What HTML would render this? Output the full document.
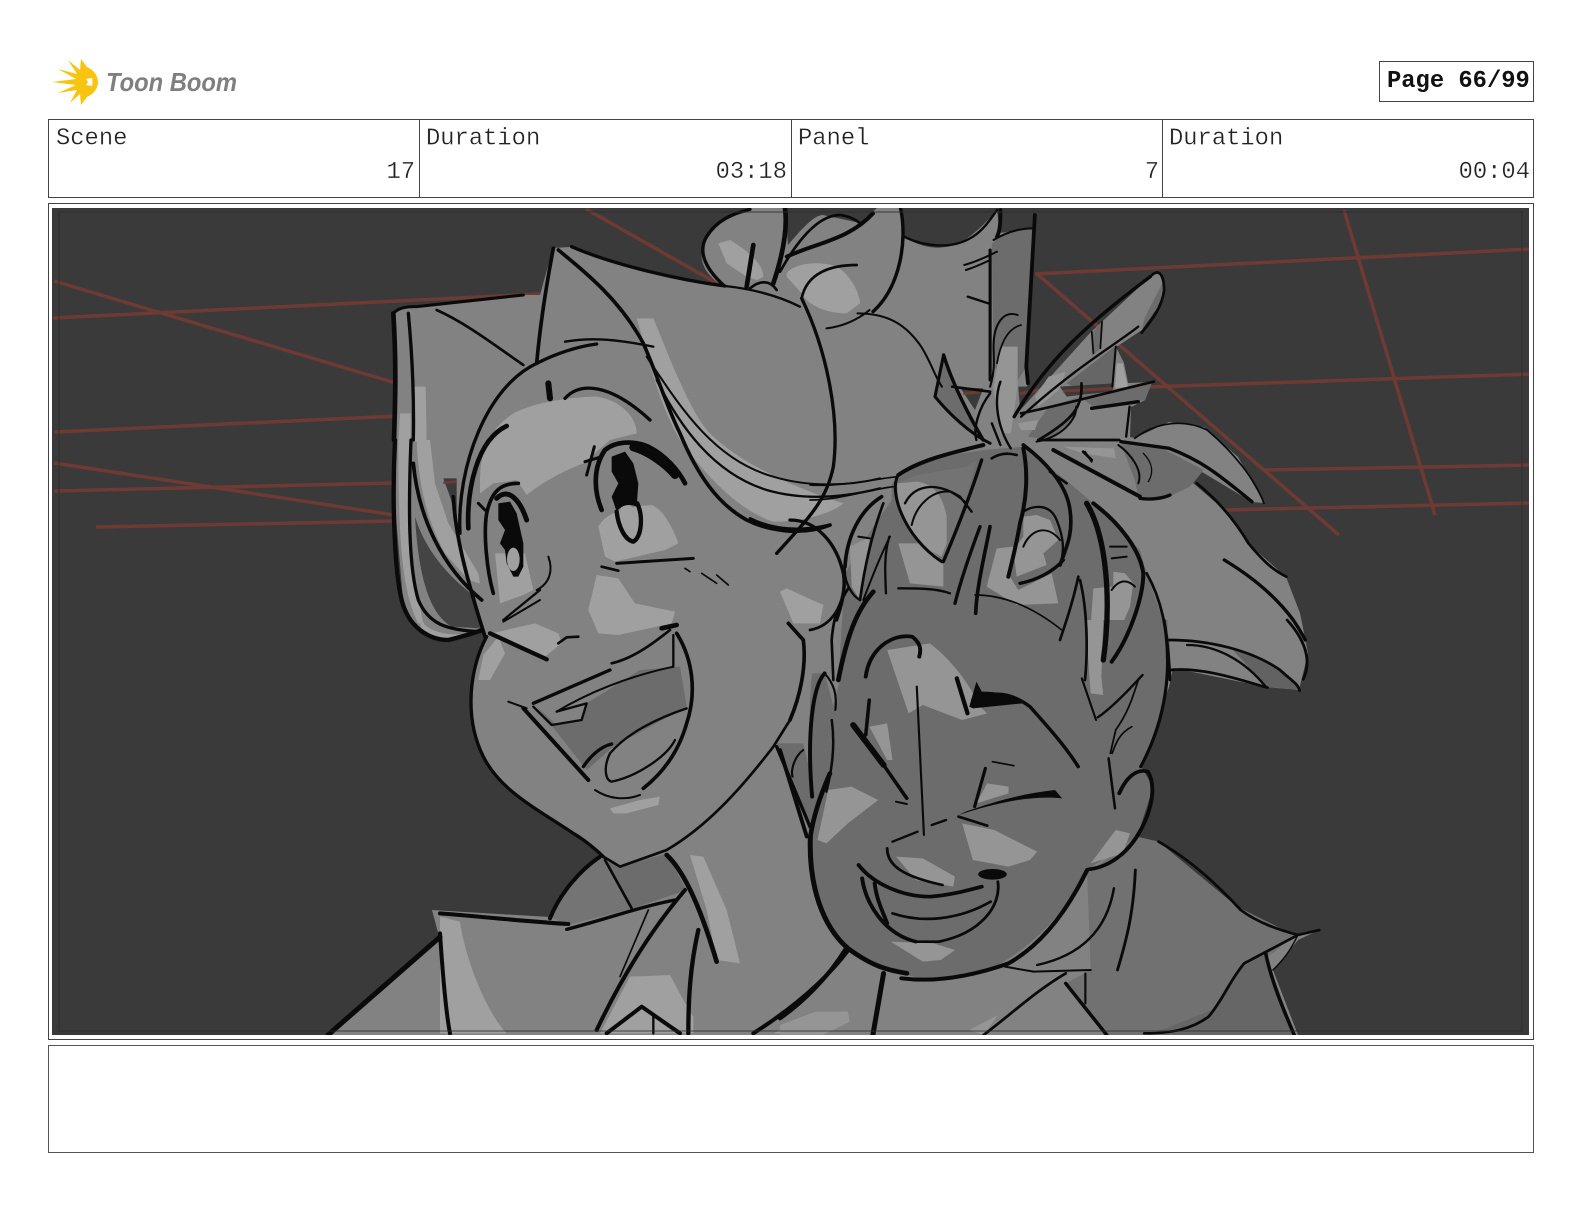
<!DOCTYPE html>
<html lang="en">
<head>
<meta charset="utf-8">
<title>Storyboard page 66</title>
<style>
html,body{margin:0;padding:0;background:#fff}
svg{display:block}
.t{font-family:"Liberation Mono",monospace;font-size:23.8px;fill:#222;stroke:#fff;stroke-width:.3px;paint-order:normal}
.p{font-family:"Liberation Mono",monospace;font-size:23.8px;font-weight:700;fill:#111}
.m{fill:#828282}.d{fill:#6c6c6c}.l{fill:#a0a0a0}.h{fill:#959595}.b{fill:#3a3a3a}
.s{fill:none;stroke:#0a0a0a;stroke-linecap:round;stroke-linejoin:round}
.f{fill:#0a0a0a}
</style>
</head>
<body>
<svg xmlns="http://www.w3.org/2000/svg" width="1584" height="1224" viewBox="0 0 1584 1224">
<defs><clipPath id="c"><rect x="52" y="208" width="1477" height="827"/></clipPath></defs>
<rect width="1584" height="1224" fill="#fff"/>

<!-- logo -->
<path fill="#f7c50f" d="M52,82L76,79L58,69L77,74L68,60L80,70L81,59L87,67C94,70 98,76 98,82C98,88 94,94 87,97L81,105L80,94L70,103L77,90L58,93L76,85Z"/>
<path fill="#fff" d="M86,79L92,78Q93,82 92,86L86,85L88,82Z"/>
<text x="106" y="91" font-family="Liberation Sans,sans-serif" font-weight="700" font-style="italic" font-size="26" fill="#7f7f7f" textLength="131" lengthAdjust="spacingAndGlyphs">Toon Boom</text>

<!-- page box -->
<rect x="1379.5" y="61.5" width="154" height="40" fill="#fff" stroke="#444"/>
<text x="1387" y="87" class="p">Page 66/99</text>

<!-- header table -->
<rect x="48.5" y="119.5" width="1485" height="78" fill="#fff" stroke="#444"/>
<path d="M419.5,119V197M791.5,119V197M1162.5,119V197" stroke="#444" fill="none"/>
<text x="56" y="144.5" class="t">Scene</text>
<text x="426" y="144.5" class="t">Duration</text>
<text x="798" y="144.5" class="t">Panel</text>
<text x="1169" y="144.5" class="t">Duration</text>
<text x="415" y="178" class="t" text-anchor="end">17</text>
<text x="787" y="178" class="t" text-anchor="end">03:18</text>
<text x="1159" y="178" class="t" text-anchor="end">7</text>
<text x="1530" y="178" class="t" text-anchor="end">00:04</text>

<!-- panel frame & notes -->
<rect x="48.5" y="203.5" width="1485" height="836" fill="#fff" stroke="#444"/>
<rect x="48.5" y="1045.5" width="1485" height="107" fill="#fff" stroke="#555"/>

<g clip-path="url(#c)">
<rect x="52" y="208" width="1477" height="827" fill="#3a3a3a"/>

<!-- red perspective lines -->
<g fill="none" stroke="#6e3a33" stroke-width="3.5">
<path d="M53,318L540,294M54,281L399,384M54,432L399,416M54,463L394,515M54,491L394,483M96,527L394,521M586,209L720,285"/>
<path d="M1035,274L1531,249M1036,273L1339,535M1344,210L1435,515M1000,392L1531,374M1263,470L1531,465M1223,510L1531,503"/>
</g>

<!-- silhouettes -->
<path class="m" d="M393,313Q398,306 417,306L523,295L540,295L553,248L570,247C630,270 680,280 723,286C705,275 700,262 702,250C708,228 730,212 750,208L785,208L788,245C805,225 815,215 823,215L860,223L877,208L900,208L904,237C920,247 935,249 945,247C960,246 975,235 997,210L1000,233L1033,228L1026,367L1028,383L1014,420L1000,440L900,600L860,1035L328,1035L440,940L432,910L550,917L603,857L573,833C533,807 500,790 483,757C463,717 470,667 487,637L482,632L448,640C430,640 410,625 403,600L395,505Z"/>
<path class="m" d="M1014,417L1090,333L1152,275L1162,273L1164,293L1142,330L1116,347L1124,363L1128,383L1152,382L1145,400L1131,407L1130,437L1135,438L1169,422L1204,427L1238,457L1264,503L1252,502L1202,472L1193,483L1221,507L1252,547L1286,577L1300,613L1308,653L1299,690L1266,687L1173,668L1169,687L1141,767L1153,787L1137,837L1158,842L1237,907L1294,935L1319,930L1298,940L1273,970L1298,1035L800,1035L800,700L1000,440Z"/>

<!-- girl fills upper -->
<g transform="translate(380,200) scale(.33333)">
<path class="l" d="M95,560L137,560L140,725L97,725Z"/>
<path class="l" d="M60,640L92,640L92,725L55,725Z"/>
<path class="l" d="M300,850C300,780 310,700 400,640C480,600 600,590 650,590C720,600 770,650 770,700L690,720L610,790C530,820 470,860 440,885L410,840L340,850L300,880Z"/>
<path class="l" d="M770,355L820,355C860,450 930,640 990,700C1060,770 1200,850 1390,910C1340,950 1250,965 1180,965C1100,940 1000,860 900,720C830,600 800,450 770,355Z"/>
<path class="l" d="M1220,220C1240,190 1320,180 1370,200C1420,230 1440,290 1440,310L1400,340C1330,340 1280,310 1265,280L1220,230Z"/>
<path class="l" d="M1015,130L1050,120C1100,150 1150,190 1150,230L1130,240L1100,230L1040,190Z"/>
<path class="l" d="M1200,1175L1220,1165L1330,1215L1320,1270L1240,1270Z"/>
</g>

<!-- eyes/tail fills -->
<g transform="translate(385,440) scale(.33333)">
<path class="b" d="M175,115L215,115L215,235L195,170Z"/>
<path d="M175,128L215,125" stroke="#6e3a33" stroke-width="8"/>
<path fill="#444" d="M90,230C100,400 130,520 200,560L285,565L270,470C190,410 120,330 90,230Z"/>
<path class="l" d="M40,0L75,0L75,350L115,550L100,550C50,450 40,300 40,0Z"/>
<path class="l" d="M95,0L135,0L150,130L190,250L280,400L285,430L250,420L180,340C130,250 100,140 95,0Z"/>
<path class="l" d="M100,520L120,555C150,580 200,590 270,578C220,598 150,600 110,575Z"/>
<path class="l" d="M640,260C660,220 720,200 800,195C840,210 870,280 880,310L840,330L690,365L660,350Z"/>
<path class="l" d="M330,340L420,340L445,450L415,465L345,490Z"/>
<path class="l" d="M635,405L700,415L750,490L870,515L860,550L700,585L640,580L610,510Z"/>
<path class="l" d="M320,580L450,550L520,580L530,610L480,650L340,590Z"/>
</g>

<g transform="translate(440,600) scale(.33333)">
<path class="l" d="M115,240L130,165L175,110L195,160L150,240Z"/>
<path class="l" d="M510,625L600,600L660,590L655,615L560,640L520,640Z"/>
<path class="d" d="M290,320L600,210L720,200L740,320L520,440L440,510Z"/>
<path class="m" d="M280,310L510,210L600,170L700,110L700,200L600,210L440,310L430,360L350,375Z"/>
<path class="m" d="M500,470L740,325L705,420C680,470 590,530 515,545Z"/>
<path class="d" d="M490,780L545,800L680,760L740,870L580,925Z"/>
<path fill="#747474" d="M330,950C370,870 430,810 490,770L580,925L380,975Z"/>
<path class="l" d="M750,765L790,770L860,930L900,1090L830,1080L800,930Z"/>
<path class="l" d="M480,1300L570,1130L690,1125L730,1200L760,1250L760,1300Z"/>
<path class="l" d="M0,950L60,965C80,1100 150,1250 200,1300L0,1300Z"/>
<path class="l" d="M1000,1300L1130,1240L1220,1235L1225,1265L1150,1300Z"/>
<path class="d" d="M1010,430L1090,430L1130,600L1110,700Z"/>
</g>

<!-- ponytail fills -->
<g transform="translate(780,200) scale(.34444,.33333)">
<path class="d" d="M615,130L660,95L735,85L715,500L680,560L620,500Z"/>
<path class="h" d="M640,440L690,440L690,560L670,700L640,700L620,560Z"/>
<path class="d" d="M450,590L475,470L510,560L590,710L540,680Z"/>
<path class="d" d="M905,400L935,365L930,445L905,470Z"/>
<path class="d" d="M1090,290L1110,250L1105,310L1050,390L1060,350Z"/>
<path class="h" d="M780,530L830,515L810,570L750,620L740,590Z"/>
<path class="d" d="M870,590L1080,548L1060,600L910,620Z"/>
<path class="d" d="M780,620L870,590L860,650L780,720L720,710Z"/>
<path class="h" d="M690,670L750,660L740,690L700,690Z"/>
<path class="h" d="M820,740L970,745L975,775L880,760Z"/>
<path class="d" d="M990,730L1100,740L1230,810L1190,860L1120,895L1040,890L1030,840Z"/>
</g>
<g transform="translate(900,330) scale(.33333)">
<path class="b" d="M180,172L250,175L225,240Z"/>
<path class="b" d="M355,170L400,170L360,235Z"/>
<path fill="#666" d="M500,160L650,45L640,170L540,180Z"/>
<path class="b" d="M480,170L640,160L635,185L540,195L500,200Z"/>
<path d="M190,190L240,186M360,190L400,186M490,183L640,175" stroke="#6e3a33" stroke-width="9" fill="none"/>
<path class="l" d="M650,100L668,100L684,170L645,175Z"/>
</g>

<!-- boy hair fills -->
<g transform="translate(810,440) scale(.33333)">
<path class="d" d="M245,130C330,60 420,45 520,30L640,20L780,130L850,190L990,330L1010,400L1080,600L1080,720L85,720L105,400L190,260L245,180Z"/>
<path class="m" d="M262,130L320,105L470,80L500,60L470,170L400,365C330,320 260,230 262,130Z" opacity=".35"/>
<path class="h" d="M262,130L320,125C370,130 400,170 410,230L410,310L395,350L340,320C290,270 260,200 262,130Z"/>
<path class="h" d="M265,310L340,310L400,365L400,440L300,430Z"/>
<path class="h" d="M120,320L180,290L150,480L125,440Z"/>
<path class="h" d="M640,230L680,225L720,240L745,300L700,340L710,375L620,410L610,330L640,290Z"/>
<path class="h" d="M560,325L610,320L600,410L625,450L725,400L745,490L620,495L530,440Z"/>
<path class="h" d="M850,445L910,440L910,395L945,400L970,430L960,500L900,640L860,660L865,720L830,720Z"/>
</g>

<!-- boy face fills -->
<g transform="translate(780,620) scale(.35714,.33333)">
<path class="d" d="M85,650C80,800 120,920 190,985C260,1050 400,1090 500,1075C650,1050 790,900 860,750L1000,650L1045,500L1010,440C1060,350 1090,200 1085,0L220,0C150,200 100,500 85,650Z"/>
<path fill="#717171" d="M860,760L1000,650L1060,665L1280,860L1440,945L1380,1000L1280,1050L1210,1170L1030,1245L920,1245L800,1090L870,1050Z"/>
<path fill="#666" d="M1280,1050L1360,1000L1440,1245L1030,1245L1210,1170Z"/>
<path fill="#626262" d="M1260,80L1330,105L1420,170L1455,210L1360,200Z"/>
<path class="d" d="M90,160L125,160L155,280L130,515L95,530C75,350 85,200 90,160Z"/>
<path class="h" d="M300,90L420,70C480,120 530,190 560,260L580,280L510,300L400,255L360,280Z"/>
<path class="h" d="M250,320L300,310L315,420L300,420Z"/>
<path class="h" d="M105,660L135,510L200,500L275,540L190,610L130,670Z"/>
<path class="h" d="M580,490L640,500L640,520L550,550Z"/>
<path class="h" d="M510,610L600,630L720,695L700,720L640,740L540,720Z"/>
<path class="h" d="M325,710L400,715L490,770L485,800L380,780Z"/>
<path class="h" d="M310,965L430,970L490,990L450,1020L400,1025Z"/>
<path class="h" d="M870,730L940,630L980,640L960,700Z"/>
<path class="h" d="M855,0L905,0L900,170L905,225L870,220Z"/>
<path class="h" d="M0,1215L100,1175L190,1175L195,1205L120,1245L0,1245Z"/>
<path class="h" d="M530,1230L610,1185L570,1245Z"/>
<path class="f" d="M530,260L550,185L565,215C620,215 660,230 680,250L540,265Z"/>
<path class="f" d="M500,585C600,550 700,525 790,535L770,510C680,520 600,545 520,575Z"/>
<ellipse cx="595" cy="763" rx="40" ry="16" class="f"/>
</g>

<!-- black lines: girl top -->
<g transform="translate(380,200) scale(.33333)" class="s">
<path stroke-width="9" d="M40,340Q60,318 110,320L430,285"/>
<path stroke-width="8" d="M170,330C260,370 350,440 430,495"/>
<path stroke-width="11" d="M520,145C500,250 480,380 470,490"/>
<path stroke-width="10" d="M575,140C700,195 900,240 1035,258"/>
<path stroke-width="7" d="M1035,258C1100,265 1180,280 1260,320"/>
<path stroke-width="11" d="M535,150C620,220 720,300 790,430C830,520 860,620 900,700C950,820 1010,910 1100,960C1160,990 1260,1010 1350,975"/>
<path stroke-width="14" d="M40,340C50,500 45,620 42,720"/>
<path stroke-width="10" d="M85,340C100,500 102,620 100,720"/>
<path stroke-width="10" d="M240,1000C230,800 320,560 470,490C530,460 590,440 650,432"/>
<path stroke-width="7" d="M555,425C640,410 720,420 820,440"/>
<path stroke-width="14" d="M265,985C260,870 290,720 380,678"/>
<path stroke-width="18" d="M505,550L510,595"/>
<path stroke-width="10" d="M555,595C600,545 690,550 810,660"/>
<path stroke-width="9" d="M710,1090L940,1075"/>
<path stroke-width="8" d="M665,1100L715,1112"/>
<path stroke-width="5" d="M915,1105L930,1115M965,1120L1010,1150M1010,1125L1045,1155"/>
<path stroke-width="6" d="M505,1070C520,1110 510,1150 470,1170"/>
<path stroke-width="7" d="M480,1170L370,1260"/>
<path stroke-width="10" d="M1030,255C970,200 955,150 980,110C1010,60 1060,40 1110,28"/>
<path stroke-width="14" d="M1215,25C1225,100 1200,190 1180,250M1120,135L1100,260"/>
<path stroke-width="8" d="M1110,265C1140,240 1170,240 1190,270"/>
<path stroke-width="8" d="M1200,215C1270,90 1330,45 1380,45C1420,50 1440,70 1440,70M1430,195C1350,195 1280,220 1265,295"/>
<path stroke-width="10" d="M1265,295C1340,450 1380,650 1360,800C1340,900 1290,950 1190,1060M1230,960C1310,960 1370,1030 1390,1120C1400,1170 1380,1230 1370,1260"/>
<path stroke-width="6" d="M800,470C900,620 1000,780 1180,830C1280,860 1400,860 1500,835"/>
<path stroke-width="7" d="M830,540C900,680 1000,820 1160,870C1280,905 1400,890 1500,865"/>
<path stroke-width="8" d="M1110,955C1160,980 1240,1000 1345,975"/>
</g>

<!-- eyes + tail lines -->
<g transform="translate(385,440) scale(.33333)" class="s">
<ellipse cx="730" cy="245" rx="26" ry="56" class="l" stroke="none" transform="rotate(-8 730 245)"/>
<path class="f" stroke="none" d="M680,50L720,35L745,70L760,130L755,200C730,190 710,195 695,215L680,170L700,130L680,95Z"/>
<path stroke-width="13" d="M695,215C700,260 720,300 745,305C770,290 775,230 757,190"/>
<path stroke-width="14" d="M650,210C625,150 625,80 660,30C690,5 740,0 790,20C840,45 880,90 900,130"/>
<path stroke-width="24" d="M745,22C790,35 840,70 870,105"/>
<path stroke-width="9" d="M628,20L605,105M600,65L650,50"/>
<path class="f" stroke="none" d="M340,190L375,185L395,220L415,310L415,380L400,410L385,410L365,370L360,330L345,310L360,270L340,240Z"/>
<ellipse cx="385" cy="358" rx="19" ry="35" class="l" stroke="none"/>
<path stroke-width="11" d="M325,460C305,390 295,280 305,220C320,150 350,130 400,130"/>
<path stroke-width="15" d="M335,175C370,140 405,180 425,240"/>
<path stroke-width="9" d="M280,190L300,210"/>
<path stroke-width="13" d="M30,0C20,200 30,400 50,480C70,560 130,600 190,600C230,590 270,580 290,570"/>
<path stroke-width="10" d="M78,0C70,200 70,380 100,480C130,550 180,570 285,575"/>
<path stroke-width="11" d="M85,70C100,230 170,380 290,480"/>
<path stroke-width="11" d="M205,170C210,280 240,400 300,590"/>
<path stroke-width="8" d="M520,610L545,592L580,590"/>
</g>

<!-- black lines: ponytail -->
<g transform="translate(780,200) scale(.34444,.33333)" class="s">
<path stroke-width="12" d="M20,170C100,130 200,120 270,40"/>
<path stroke-width="10" d="M350,25C370,120 350,260 270,335"/>
<path stroke-width="6" d="M225,340C320,340 370,380 410,440C440,490 450,530 470,560M135,385C180,380 225,360 260,330"/>
<path stroke-width="7" d="M360,110C420,140 500,150 560,110C590,90 610,60 630,30"/>
<path stroke-width="11" d="M640,30C640,60 640,90 630,110"/>
<path stroke-width="9" d="M610,150L610,540"/>
<path stroke-width="11" d="M740,45L715,500L720,550"/>
<path stroke-width="6" d="M620,120C660,95 700,85 735,85M535,195C570,185 600,170 630,155M540,210C570,200 590,190 610,180M690,345C650,330 620,370 620,440C620,480 625,510 610,560"/>
<path stroke-width="7" d="M545,290L605,310"/>
<path stroke-width="5" d="M700,375C660,385 640,430 630,490"/>
<path stroke-width="9" d="M475,465L450,590C490,640 550,700 610,730"/>
<path stroke-width="10" d="M475,465C500,550 550,650 590,720"/>
<path stroke-width="8" d="M500,560L610,575"/>
<path stroke-width="7" d="M640,545C620,600 630,680 670,745M610,580C580,620 560,680 570,720M615,670L640,735"/>
<path stroke-width="10" d="M680,650C770,490 880,380 1075,230"/>
<path stroke-width="8" d="M1080,225C1100,205 1115,225 1115,270C1110,320 1080,360 1050,398"/>
<path stroke-width="7" d="M1040,380C980,430 860,500 700,650"/>
<path stroke-width="5" d="M905,395L910,460M935,365L930,445"/>
<path stroke-width="8" d="M700,640C800,620 980,570 1085,545M875,550C880,620 850,660 750,720"/>
<path stroke-width="10" d="M905,625L1040,605"/>
<path stroke-width="6" d="M860,620C860,660 820,710 745,725M975,440L965,560"/>
<path stroke-width="7" d="M1015,620L1005,710"/>
<path stroke-width="8" d="M880,755L905,780"/>
<path stroke-width="10" d="M990,725L1130,745C1220,780 1270,820 1370,905"/>
<path stroke-width="5" d="M1030,715C1100,660 1180,660 1240,690C1320,760 1380,840 1405,910"/>
<path stroke-width="8" d="M750,720L985,720"/>
<path stroke-width="8" d="M1210,850C1270,900 1320,960 1360,1030C1400,1080 1430,1110 1470,1130"/>
<path stroke-width="10" d="M1290,1080C1370,1130 1440,1190 1490,1260C1510,1290 1520,1310 1525,1320"/>
</g>

<!-- black lines: boy hair -->
<g transform="translate(810,440) scale(.33333)" class="s">
<path stroke-width="12" d="M265,105C330,60 420,40 520,15"/>
<path stroke-width="9" d="M265,105C235,150 280,290 395,365"/>
<path stroke-width="7" d="M285,190C310,140 370,120 450,170L485,215"/>
<path stroke-width="6" d="M305,255C320,190 370,150 420,155C440,165 465,185 470,190"/>
<path stroke-width="10" d="M515,60C480,170 440,270 400,365"/>
<path stroke-width="8" d="M545,55C570,40 590,38 620,45"/>
<path stroke-width="12" d="M640,25C655,100 650,180 630,250C620,310 605,370 595,410"/>
<path stroke-width="7" d="M640,215C670,195 720,190 740,240C760,290 765,330 750,375"/>
<path stroke-width="6" d="M640,320C660,270 710,250 750,300"/>
<path stroke-width="10" d="M630,430C680,420 730,395 760,360"/>
<path stroke-width="11" d="M640,15C700,60 770,130 780,210C790,280 770,320 750,375"/>
<path stroke-width="8" d="M720,95L770,130"/>
<path stroke-width="12" d="M730,30L990,170"/>
<path stroke-width="10" d="M990,175C1020,180 1060,175 1080,165"/>
<path stroke-width="16" d="M830,190C890,290 905,480 880,660"/>
<path stroke-width="12" d="M850,190C930,250 990,330 1000,400C1000,470 960,590 905,665"/>
<path stroke-width="6" d="M900,320L950,320M905,355L950,350M905,450C925,420 950,415 975,440"/>
<path stroke-width="8" d="M1010,400C1050,470 1075,560 1080,720M805,410C790,480 770,540 750,600M810,420C830,500 835,620 825,720"/>
<path stroke-width="10" d="M510,260C480,340 450,430 435,490"/>
<path stroke-width="11" d="M540,260C525,340 500,440 497,520"/>
<path stroke-width="7" d="M265,445C320,445 380,445 420,460"/>
<path stroke-width="5" d="M495,465C590,465 680,510 755,570M0,265L55,258"/>
<path stroke-width="11" d="M215,170C150,210 110,290 105,380"/>
<path stroke-width="8" d="M220,190C190,270 165,370 150,480"/>
<path stroke-width="6" d="M240,290C215,340 190,400 160,480M145,290L180,295"/>
<path stroke-width="7" d="M238,290C222,340 225,400 228,460M105,380C100,430 130,470 150,480"/>
<path stroke-width="14" d="M190,455C140,510 110,590 85,720"/>
<path stroke-width="8" d="M70,720L65,600C70,540 80,500 115,445"/>
<path stroke-width="8" d="M100,400C110,500 60,560 0,570"/>
<path stroke-width="5" d="M0,135C90,140 180,120 260,110M0,180C90,180 170,150 250,140"/>
<path stroke-width="6" d="M925,15C960,40 1000,90 985,130M825,35L845,65"/>
<path stroke-width="4" d="M1000,40C1030,70 1030,100 1015,125"/>
</g>

<!-- black lines: girl lower -->
<g transform="translate(440,600) scale(.33333)" class="s">
<path stroke-width="13" d="M150,100L320,178"/>
<path stroke-width="6" d="M190,65L300,0"/>
<path stroke-width="10" d="M140,110C90,200 70,350 130,470C180,570 280,620 400,700C450,730 490,770 490,770"/>
<path stroke-width="8" d="M490,770L540,800L680,750C800,680 900,570 1000,440L1050,360"/>
<path stroke-width="10" d="M280,310L510,210"/>
<path stroke-width="8" d="M515,190C580,175 640,130 690,90"/>
<path stroke-width="14" d="M665,85L710,75"/>
<path stroke-width="6" d="M350,335C440,280 560,230 700,200M205,305L260,325"/>
<path stroke-width="7" d="M700,105L700,200M280,320L335,375L425,360L440,310L350,335"/>
<path stroke-width="12" d="M250,325L445,540"/>
<path stroke-width="11" d="M710,100C760,180 770,280 740,370C720,440 680,510 610,565"/>
<path stroke-width="7" d="M740,325C650,355 560,400 510,460C490,500 495,540 515,545C590,530 680,470 705,420"/>
<path stroke-width="10" d="M430,500C450,470 480,440 515,432"/>
<path stroke-width="6" d="M465,570C510,600 560,600 600,585"/>
<path stroke-width="12" d="M330,955C360,880 420,810 480,770"/>
<path stroke-width="8" d="M495,780L575,925"/>
<path stroke-width="14" d="M680,765C740,820 790,950 830,1085"/>
<path stroke-width="12" d="M0,940C130,950 260,965 385,972M735,870C650,970 560,1100 470,1290M500,1300L605,1220L720,1300M1225,1050C1150,1150 1050,1230 940,1300M0,1000C10,1150 20,1250 30,1300"/>
<path stroke-width="10" d="M380,988C490,960 600,920 705,900M1010,440L1110,680"/>
<path stroke-width="5" d="M625,930L540,1130"/>
<path stroke-width="13" d="M775,990C750,1100 745,1200 745,1300"/>
<path stroke-width="7" d="M640,1250L640,1300"/>
<path stroke-width="11" d="M1045,70L1090,120C1100,200 1080,290 1050,360"/>
</g>
<path class="s" stroke-width="5" d="M328,1035L440,937"/>

<!-- black lines: boy face -->
<g transform="translate(780,620) scale(.35714,.33333)" class="s">
<path stroke-width="14" d="M85,650C80,800 120,920 190,985C260,1040 300,1050 355,1060"/>
<path stroke-width="12" d="M340,1075C450,1090 560,1060 640,1030C740,970 810,860 860,750"/>
<path stroke-width="13" d="M85,650C95,580 115,520 140,460"/>
<path stroke-width="7" d="M145,300C155,380 145,450 130,515"/>
<path stroke-width="11" d="M125,160C90,200 75,350 90,530"/>
<path stroke-width="6" d="M125,160C150,190 160,220 155,270M65,390C40,410 30,450 35,470"/>
<path stroke-width="11" d="M0,390L75,650M240,170C250,90 310,40 370,50C395,70 395,90 390,110"/>
<path stroke-width="10" d="M250,240L240,345"/>
<path stroke-width="17" d="M205,315L290,435"/>
<path stroke-width="10" d="M290,435L355,535"/>
<path stroke-width="6" d="M325,545L355,552M383,200L403,645"/>
<path stroke-width="7" d="M315,665L385,635M425,615L465,600"/>
<path stroke-width="12" d="M495,175L525,280"/>
<path stroke-width="10" d="M540,240C600,210 650,220 700,260C750,320 800,380 835,440"/>
<path stroke-width="9" d="M575,445L545,560"/>
<path stroke-width="5" d="M595,425L655,437"/>
<path stroke-width="8" d="M500,590L580,617"/>
<path stroke-width="6" d="M845,175L885,300"/>
<path stroke-width="7" d="M1015,165C960,230 920,270 890,292M920,415L938,565"/>
<path stroke-width="5" d="M1005,175C990,220 980,270 940,330L925,400M985,320C950,340 940,370 930,400"/>
<path stroke-width="9" d="M1075,0C1100,150 1080,300 1010,440"/>
<path stroke-width="8" d="M1090,60C1200,60 1320,90 1400,150C1430,180 1450,190 1455,212M1095,150C1180,140 1290,180 1365,203M1420,0C1470,60 1490,120 1465,178"/>
<path stroke-width="7" d="M1140,75C1220,75 1300,120 1360,200"/>
<path stroke-width="11" d="M950,520C970,470 1000,445 1030,455C1055,500 1040,570 1010,630C980,690 930,740 865,748"/>
<path stroke-width="8" d="M1060,665C1150,720 1230,800 1290,870C1340,910 1400,930 1450,945M1510,930L1450,945L1300,1030C1260,1080 1240,1140 1200,1190C1150,1230 1090,1240 1020,1240"/>
<path stroke-width="4" d="M1450,945C1430,990 1410,1020 1380,1050"/>
<path stroke-width="10" d="M1360,1000C1375,1080 1410,1170 1440,1245"/>
<path stroke-width="8" d="M995,750C990,880 970,960 945,1050"/>
<path stroke-width="7" d="M935,805C920,900 870,1000 720,1035"/>
<path stroke-width="6" d="M630,1040L710,1055L870,1050M855,1060L855,1150"/>
<path stroke-width="8" d="M800,1060C720,1110 650,1180 570,1245"/>
<path stroke-width="10" d="M800,1090L915,1245"/>
<path stroke-width="14" d="M290,1060L260,1245"/>
<path stroke-width="12" d="M185,985C130,1080 60,1150 0,1195"/>
<path stroke-width="8" d="M300,685C300,740 350,770 455,795M315,880C400,910 500,900 590,845M610,785C620,860 560,940 445,965"/>
<path stroke-width="11" d="M220,735C260,790 340,830 420,830C480,825 530,810 565,800M230,775C240,850 290,940 380,965M265,790C270,840 290,880 300,910"/>
<path stroke-width="8" d="M385,965L445,965"/>
</g>

<!-- inner frame -->
<rect x="59" y="212" width="1463" height="819" fill="none" stroke="#2e2e2e" stroke-opacity=".55" stroke-width="1.5"/>
</g>
</svg>
</body>
</html>
